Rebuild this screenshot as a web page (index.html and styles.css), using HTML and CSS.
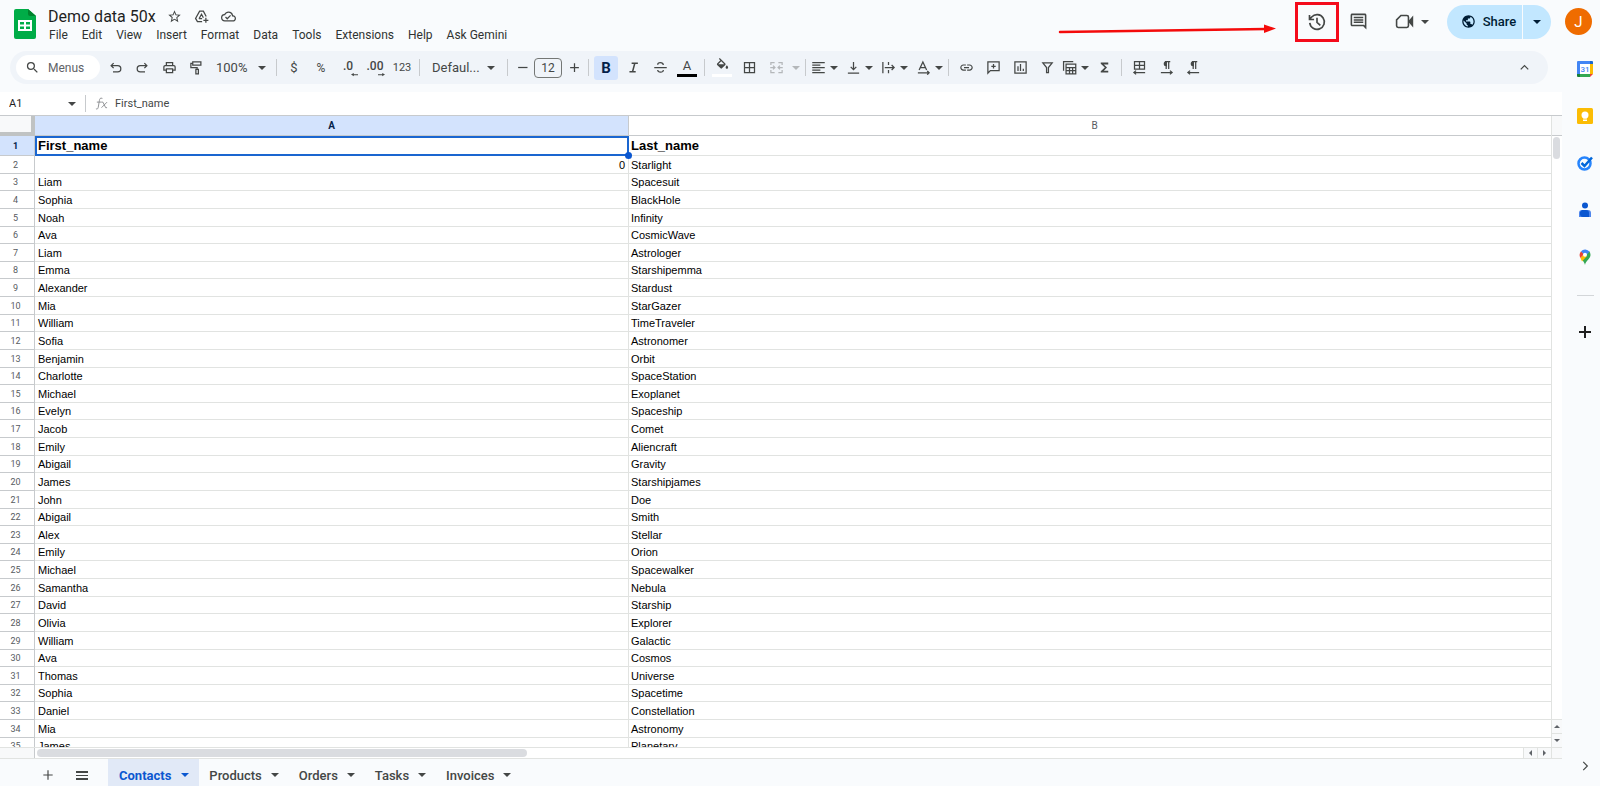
FILE: index.html
```
<!DOCTYPE html>
<html lang="en">
<head>
  <meta charset="UTF-8" />
  <meta name="viewport" content="width=device-width, initial-scale=1.0"/>
  <title>Demo data 50x</title>
  <link rel="stylesheet" href="styles.css">
</head>
<body>

  <header class="header">
    <svg class="logo" viewBox="0 0 22 30">
      <path fill="#00ac47" d="M2 0h12l8 7v21a2 2 0 0 1-2 2H2a2 2 0 0 1-2-2V2a2 2 0 0 1 2-2z"/>
      <path fill="#00832d" d="M14 0l8 7h-6a2 2 0 0 1-2-2z"/>
      <path fill="#fff" fill-rule="evenodd" d="M4 11h14v11H4zM6 13v2.500h4V13zM12 13v2.500h4V13zM6 17.500V20h4v-2.500zM12 17.500V20h4v-2.500z"/>
    </svg>
    <div class="doc">
      <div class="title-row">
        <h1 class="title">Demo data 50x</h1>
        <button class="title-btn" aria-label="Star"><svg viewBox="0 0 24 24"><path d="M22 9.240l-7.190-.620L12 2 9.190 8.630 2 9.240l5.460 4.730L5.820 21 12 17.270 18.180 21l-1.630-7.030L22 9.240zM12 15.400l-3.760 2.270 1-4.280-3.320-2.880 4.380-.380L12 6.100l1.710 4.040 4.380.380-3.320 2.880 1 4.280L12 15.400z"/></svg></button>
        <button class="title-btn" aria-label="Move"><svg viewBox="0 0 24 24" class="line"><path d="M13 20H5.500L2.500 15 9 3.500h6l4.500 8.500M8 15.500l4-7 3 5.500M8 15.500h5M19 14v8M15 18h8"/></svg></button>
        <button class="title-btn" aria-label="Saved to Drive"><svg viewBox="0 0 24 24"><path d="M19.350 10.040A7.490 7.490 0 0 0 12 4C9.110 4 6.600 5.640 5.350 8.040A5.994 5.994 0 0 0 0 14c0 3.310 2.690 6 6 6h13c2.760 0 5-2.240 5-5 0-2.640-2.050-4.780-4.650-4.960zM19 18H6c-2.210 0-4-1.790-4-4 0-2.050 1.530-3.760 3.560-3.970l1.070-.110.500-.950A5.469 5.469 0 0 1 12 6c2.620 0 4.880 1.860 5.390 4.430l.300 1.500 1.530.110A2.980 2.980 0 0 1 22 15c0 1.650-1.350 3-3 3zm-9-3.820l-2.090-2.090L6.500 13.500 10 17l6.010-6.010-1.410-1.410z"/></svg></button>
      </div>
      <nav class="menu">
        <button>File</button>
        <button>Edit</button>
        <button>View</button>
        <button>Insert</button>
        <button>Format</button>
        <button>Data</button>
        <button>Tools</button>
        <button>Extensions</button>
        <button>Help</button>
        <button>Ask Gemini</button>
      </nav>
    </div>

    <div class="header-right">
      <svg class="arrow" viewBox="0 0 218 12"><path fill="none" stroke="#f40b0b" stroke-width="2.500" stroke-linecap="round" d="M2 9l206-3"/><path fill="#f40b0b" d="M206 1.500l12 4-12 4.500z"/></svg>
      <button class="history" aria-label="Version history"><svg viewBox="0 0 24 24" class="line"><path d="M3.300 13a8.800 8.800 0 1 0 2.300-7L3 8.800M3 3.500v5.500h5.500M12 7v5.500l4 3.500"/></svg></button>
      <button class="comments" aria-label="Comments"><svg viewBox="0 0 24 24"><path d="M21.990 4c0-1.100-.890-2-1.990-2H4c-1.100 0-2 .900-2 2v12c0 1.100.900 2 2 2h14l4 4-.010-18zM20 4v13.170L18.830 16H4V4h16zM6 12h12v2H6zm0-3h12v2H6zm0-3h12v2H6z"/></svg></button>
      <button class="meet" aria-label="Video call"><svg viewBox="0 0 24 24" class="line"><path d="M7.500 4.500H15a2 2 0 0 1 2 2v11a2 2 0 0 1-2 2H4a2 2 0 0 1-2-2V10z"/><path fill="currentColor" d="M18.500 11l3.500-4v10l-3.500-4z"/></svg><span class="caret"></span></button>
      <div class="share">
        <button class="share-main"><svg viewBox="0 0 24 24"><path d="M12 2C6.480 2 2 6.480 2 12s4.480 10 10 10 10-4.480 10-10S17.520 2 12 2zm-1 17.930c-3.950-.490-7-3.850-7-7.930 0-.620.080-1.210.210-1.790L9 15v1c0 1.100.900 2 2 2v1.930zm6.900-2.540c-.260-.810-1-1.390-1.900-1.390h-1v-3c0-.550-.450-1-1-1H8v-2h2c.550 0 1-.450 1-1V7h2c1.100 0 2-.900 2-2v-.410c2.930 1.190 5 4.060 5 7.410 0 2.080-.800 3.970-2.100 5.390z"/></svg>Share</button>
        <button class="share-more" aria-label="Share options"><span class="caret"></span></button>
      </div>
      <button class="avatar">J</button>
    </div>
  </header>

  <div class="page">
    <main class="main">
      <div class="toolbar">
        <label class="search">
          <svg viewBox="0 0 24 24"><path d="M15.500 14h-.790l-.280-.270A6.470 6.470 0 0 0 16 9.500 6.500 6.500 0 1 0 9.500 16c1.610 0 3.090-.590 4.230-1.570l.270.280v.790l5 4.990L20.490 19l-4.990-5zm-6 0C7.010 14 5 11.990 5 9.500S7.010 5 9.500 5 14 7.010 14 9.500 11.990 14 9.500 14z"/></svg>
          <input type="text" placeholder="Menus" aria-label="Search the menus">
        </label>
        <button class="tool" aria-label="Undo"><svg viewBox="0 0 24 24" class="line"><path d="M8 19h7.500a4.500 4.500 0 0 0 0-10H5M9 5L5 9l4 4"/></svg></button>
        <button class="tool" aria-label="Redo"><svg viewBox="0 0 24 24" class="line"><path d="M16 19H8.500a4.500 4.500 0 0 1 0-10H19M15 5l4 4-4 4"/></svg></button>
        <button class="tool" aria-label="Print"><svg viewBox="0 0 24 24"><path d="M19 8h-1V3H6v5H5c-1.660 0-3 1.340-3 3v6h4v4h12v-4h4v-6c0-1.660-1.340-3-3-3zM8 5h8v3H8V5zm8 12v2H8v-4h8v2zm2-2v-2H6v2H4v-4c0-.550.450-1 1-1h14c.550 0 1 .450 1 1v4h-2z"/></svg></button>
        <button class="tool" aria-label="Paint format"><svg viewBox="0 0 24 24" class="line"><path d="M6 3h13v5H6zM6 5.500H3V12h10v3M11 15h4v7h-4z"/></svg></button>
        <div class="pick pick-zoom"><select aria-label="Zoom"><option>100%</option></select><span class="caret"></span></div>
        <span class="sep"></span>
        <button class="tool">$</button>
        <button class="tool small">%</button>
        <button class="tool decimal" aria-label="Decrease decimal places">.0<svg viewBox="0 0 10 6"><path d="M10 2.500H4V1L0 3l4 2.500V4h6z"/></svg></button>
        <button class="tool decimal" aria-label="Increase decimal places">.00<svg viewBox="0 0 10 6"><path d="M0 2.500h6V1l4 2-4 2.500V4H0z"/></svg></button>
        <button class="tool digits">123</button>
        <span class="sep"></span>
        <div class="pick pick-font"><select aria-label="Font"><option>Defaul...</option></select><span class="caret"></span></div>
        <span class="sep"></span>
        <button class="tool step" aria-label="Decrease font size"><svg viewBox="0 0 24 24" class="line"><path d="M5 12h15"/></svg></button>
        <input class="font-size" type="text" value="12" aria-label="Font size">
        <button class="tool step" aria-label="Increase font size"><svg viewBox="0 0 24 24" class="line"><path d="M5 12h14M12 5v14"/></svg></button>
        <span class="sep"></span>
        <button class="tool bold active">B</button>
        <button class="tool" aria-label="Italic"><svg viewBox="0 0 24 24"><path d="M9 4v2.500h3.500l-3 11H5.500V20h10v-2.500H12l3-11h4V4z"/></svg></button>
        <button class="tool" aria-label="Strikethrough"><svg viewBox="0 0 24 24" class="line"><path d="M2 12h20M16.500 8c-.500-5-9-4.500-9-.500M7.500 16c.500 5 9.500 4.500 9 0"/></svg></button>
        <button class="tool text-color">A</button>
        <span class="sep"></span>
        <button class="tool fill-color" aria-label="Fill color"><svg viewBox="0 0 24 24"><path d="M16.560 8.940L7.620 0 6.210 1.410l2.380 2.380-5.150 5.150c-.590.590-.590 1.540 0 2.120l5.500 5.500c.290.290.680.440 1.060.440s.770-.150 1.060-.440l5.500-5.500c.590-.580.590-1.530 0-2.120zM5.210 10L10 5.210 14.790 10H5.210zM19 11.500s-2 2.170-2 3.500c0 1.100.900 2 2 2s2-.900 2-2c0-1.330-2-3.500-2-3.500z"/></svg></button>
        <button class="tool" aria-label="Borders"><svg viewBox="0 0 24 24"><path d="M3 3v18h18V3H3zm8 16H5v-6h6v6zm0-8H5V5h6v6zm8 8h-6v-6h6v6zm0-8h-6V5h6v6z"/></svg></button>
        <button class="combo merge" aria-label="Merge cells" disabled><svg viewBox="0 0 24 24" class="line"><path d="M9 4H3v4M15 4h6v4M9 20H3v-4M15 20h6v-4M2 12h7M6.500 9l3 3-3 3M22 12h-7M17.500 9l-3 3 3 3"/></svg><span class="caret"></span></button>
        <span class="sep"></span>
        <button class="combo" aria-label="Horizontal align"><svg viewBox="0 0 24 24"><path d="M2 3h20v2H2zM2 7h13v2H2zM2 11h20v2H2zM2 15h13v2H2zM2 19h20v2H2z"/></svg><span class="caret"></span></button>
        <button class="combo" aria-label="Vertical align"><svg viewBox="0 0 24 24" class="line"><path d="M3 21h18M12 3v12M7.500 11l4.500 4.500 4.500-4.500"/></svg><span class="caret"></span></button>
        <button class="combo" aria-label="Text wrapping"><svg viewBox="0 0 24 24" class="line"><path d="M3 3v18M12 3v5M12 16v5M6 12h15M17 8l4 4-4 4"/></svg><span class="caret"></span></button>
        <button class="combo" aria-label="Text rotation"><svg viewBox="0 0 24 24" class="line"><path d="M5 16L11 3l6 13M7 12h8M3 20.500h18M18 17.500l3 3-3 3"/></svg><span class="caret"></span></button>
        <span class="sep"></span>
        <button class="tool" aria-label="Insert link"><svg viewBox="0 0 24 24"><path d="M3.900 12c0-1.710 1.390-3.100 3.100-3.100h4V7H7c-2.760 0-5 2.240-5 5s2.240 5 5 5h4v-1.900H7c-1.710 0-3.100-1.390-3.100-3.100zM8 13h8v-2H8v2zm9-6h-4v1.900h4c1.710 0 3.100 1.390 3.100 3.100s-1.390 3.100-3.100 3.100h-4V17h4c2.760 0 5-2.240 5-5s-2.240-5-5-5z"/></svg></button>
        <button class="tool" aria-label="Insert comment"><svg viewBox="0 0 24 24" class="line"><path d="M3 21V3h18v14H7zM12 6.500v7M8.500 10h7"/></svg></button>
        <button class="tool" aria-label="Insert chart"><svg viewBox="0 0 24 24" class="line"><path d="M3 3h18v18H3zM8 10v7.500M12 6.500v11M16.500 14v3.500"/></svg></button>
        <button class="tool" aria-label="Create a filter"><svg viewBox="0 0 24 24" class="line"><path d="M4.500 4.500h15L13.500 12v8h-3v-8z"/></svg></button>
        <button class="combo" aria-label="Table views"><svg viewBox="0 0 24 24" class="line"><path d="M2.500 17V2.500H18M6.500 6.500H22V22H6.500zM6.500 12H22M6.500 17H22M12 12v10M17 12v10"/></svg><span class="caret"></span></button>
        <button class="tool" aria-label="Functions"><svg viewBox="0 0 24 24"><path d="M18 4H6v2l6.500 6L6 18v2h12v-3h-7l5-5-5-5h7V4z"/></svg></button>
        <span class="sep"></span>
        <button class="tool" aria-label="Sheet direction"><svg viewBox="0 0 24 24" class="line"><path d="M4 2.500h16v12H4zM4 8.500h16M12 2.500v12M21 20H3M6.500 17L3 20l3.500 3"/></svg></button>
        <button class="tool" aria-label="Left to right"><svg viewBox="0 0 24 24" class="line"><path d="M18 2.500H9.500M11.500 2.500v12M15.500 2.500v12M3 20h18M17.500 17l3.500 3-3.500 3"/><path fill="currentColor" d="M11.500 3v6a3 3 0 0 1 0-6z"/></svg></button>
        <button class="tool" aria-label="Right to left"><svg viewBox="0 0 24 24" class="line"><path d="M18 2.500H9.500M11.500 2.500v12M15.500 2.500v12M21 20H3M6.500 17L3 20l3.500 3"/><path fill="currentColor" d="M11.500 3v6a3 3 0 0 1 0-6z"/></svg></button>
        <button class="tool collapse" aria-label="Hide the menus"><svg viewBox="0 0 24 24" class="line"><path d="M6 15l6-6 6 6"/></svg></button>
      </div>

      <div class="formula-bar">
        <input class="name-box" type="text" value="A1" aria-label="Name box">
        <span class="caret"></span>
        <span class="sep"></span>
        <svg class="fx" viewBox="0 0 14 14"><path d="M8 1.500C5.500.500 5 2 4.700 4L3.500 11c-.300 1.700-1 2.300-2.500 1.700M2 5.500h5M7 5.500h1.500l3 6H13M13 5.500L7 11.500"/></svg>
        <input class="formula" type="text" value="First_name" aria-label="Formula">
      </div>

      <div class="sheet">
        <div class="grid">
          <table>
            <colgroup>
              <col class="col-num">
              <col class="col-a">
              <col>
            </colgroup>
            <thead>
              <tr><th class="corner"></th><th class="selected">A</th><th>B</th></tr>
            </thead>
            <tbody id="rows"></tbody>
          </table>
        </div>
        <div class="vscroll">
          <div class="vscroll-head"></div>
          <div class="vthumb"></div>
          <button class="sb-btn up" aria-label="Scroll up"></button>
          <button class="sb-btn down" aria-label="Scroll down"></button>
        </div>
      </div>
      <div class="hscroll">
        <div class="hscroll-head"></div>
        <div class="htrack"><div class="hthumb"></div></div>
        <button class="sb-btn left" aria-label="Scroll left"></button>
        <button class="sb-btn right" aria-label="Scroll right"></button>
        <div class="scroll-corner"></div>
      </div>
    </main>

    <aside class="rail">
      <button aria-label="Calendar"><svg viewBox="0 0 18 18"><path fill="#4285f4" d="M2 1h13v3H4v10H1V2a1 1 0 0 1 1-1z"/><path fill="#1967d2" d="M14 1h2a1 1 0 0 1 1 1v2h-3z"/><path fill="#fbbc04" d="M14 4h3v10h-3z"/><path fill="#34a853" d="M4 14h10v3H4z"/><path fill="#188038" d="M1 14h3v3H2a1 1 0 0 1-1-1z"/><path fill="#ea4335" d="M14 14h3l-3 3z"/><path fill="#fff" d="M4 4h10v10H4z"/><text x="9" y="12" text-anchor="middle" class="cal-day">31</text></svg></button>
      <button aria-label="Keep"><svg viewBox="0 0 18 18"><rect x="1" y="1" width="16" height="16" rx="1.500" fill="#fbbc04"/><circle cx="9" cy="8" r="3.500" fill="#fff"/><path fill="#fff" d="M7 10h4v1.500H7zM7 12.500h4V14H7z"/></svg></button>
      <button aria-label="Tasks"><svg viewBox="0 0 18 18"><circle cx="8.500" cy="9.500" r="6" fill="none" stroke="#2684fc" stroke-width="2.500"/><path fill="none" stroke="#0066da" stroke-width="2.500" d="M5.500 9l3 3L16 3.500"/></svg></button>
      <button aria-label="Contacts"><svg viewBox="0 0 18 18"><circle cx="9" cy="4.500" r="3" fill="#0b57d0"/><path fill="#4f86ec" d="M6 9h6a3 3 0 0 1 3 3v4H3v-4a3 3 0 0 1 3-3z"/><path fill="#0b57d0" d="M6 9h4a3 3 0 0 1 3 3v4H7a3 3 0 0 1-3-3v-2z"/></svg></button>
      <button aria-label="Maps"><svg viewBox="0 0 18 18"><path fill="#34a853" d="M14.500 7c0 4-4.500 5-5.500 10-.600-2.500-1.800-4-3-5.500L13 3a5.500 5.500 0 0 1 1.500 4z"/><path fill="#fbbc04" d="M4.500 10l3-3.500L11 8l-5 5.500z"/><path fill="#ea4335" d="M5 3.200L8 6l-3.500 4C3.200 8 3.200 5.500 5 3.200z"/><path fill="#4285f4" d="M5 3.200a5.500 5.500 0 0 1 8.500.500L10 7.500 7.500 6z"/><circle cx="9" cy="6.700" r="2" fill="#fff"/></svg></button>
      <span class="rail-line"></span>
      <button aria-label="Get add-ons"><svg viewBox="0 0 18 18"><path fill="none" stroke="#1f1f1f" stroke-width="2" d="M3 9h12M9 3v12"/></svg></button>
    </aside>
  </div>

  <footer class="tabs">
    <button class="tab-icon" aria-label="Add sheet"><svg viewBox="0 0 24 24" class="line"><path d="M4 12h16M12 4v16"/></svg></button>
    <button class="tab-icon" aria-label="All sheets"><svg viewBox="0 0 14 14"><path d="M1 3h12v2H1zM1 7h12v1H1zM1 10h12v2H1z"/></svg></button>
    <button class="tab current">Contacts<span class="caret"></span></button>
    <button class="tab">Products<span class="caret"></span></button>
    <button class="tab">Orders<span class="caret"></span></button>
    <button class="tab">Tasks<span class="caret"></span></button>
    <button class="tab">Invoices<span class="caret"></span></button>
    <button class="rail-toggle" aria-label="Hide side panel"><svg viewBox="0 0 24 24" class="line"><path d="M9 5l7 7-7 7"/></svg></button>
  </footer>

  <script>
    const rows = [
      ["First_name", "Last_name"],
      [0, "Starlight"],
      ["Liam", "Spacesuit"],
      ["Sophia", "BlackHole"],
      ["Noah", "Infinity"],
      ["Ava", "CosmicWave"],
      ["Liam", "Astrologer"],
      ["Emma", "Starshipemma"],
      ["Alexander", "Stardust"],
      ["Mia", "StarGazer"],
      ["William", "TimeTraveler"],
      ["Sofia", "Astronomer"],
      ["Benjamin", "Orbit"],
      ["Charlotte", "SpaceStation"],
      ["Michael", "Exoplanet"],
      ["Evelyn", "Spaceship"],
      ["Jacob", "Comet"],
      ["Emily", "Aliencraft"],
      ["Abigail", "Gravity"],
      ["James", "Starshipjames"],
      ["John", "Doe"],
      ["Abigail", "Smith"],
      ["Alex", "Stellar"],
      ["Emily", "Orion"],
      ["Michael", "Spacewalker"],
      ["Samantha", "Nebula"],
      ["David", "Starship"],
      ["Olivia", "Explorer"],
      ["William", "Galactic"],
      ["Ava", "Cosmos"],
      ["Thomas", "Universe"],
      ["Sophia", "Spacetime"],
      ["Daniel", "Constellation"],
      ["Mia", "Astronomy"],
      ["James", "Planetary"]
    ];

    const rowsEl = document.getElementById("rows");

    rows.forEach((row, i) => {
      const tr = document.createElement("tr");
      const num = document.createElement("th");
      num.textContent = i + 1;
      tr.appendChild(num);

      row.forEach(value => {
        const td = document.createElement("td");
        td.textContent = value;
        if (typeof value === "number") td.className = "number";
        tr.appendChild(td);
      });
      rowsEl.appendChild(tr);
    });

    // A1 is the active cell
    rowsEl.rows[0].cells[0].className = "selected";
    rowsEl.rows[0].cells[1].className = "active-cell";
  </script>

</body>
</html>
```
FILE: styles.css
```
* {
  box-sizing: border-box;
}

body {
  margin: 0;
  height: 100vh;
  display: flex;
  flex-direction: column;
  overflow: hidden;
  background: #f9fbfd;
  color: #444746;
  font-family: Roboto, sans-serif;
  font-size: 13px;
}

button,
input,
select {
  margin: 0;
  padding: 0;
  border: none;
  background: transparent;
  color: inherit;
  font: inherit;
  outline: none;
}

button {
  display: flex;
  align-items: center;
  justify-content: center;
  flex-shrink: 0;
  cursor: pointer;
}

svg {
  display: block;
  flex-shrink: 0;
  fill: currentColor;
}

.line {
  fill: none;
  stroke: currentColor;
  stroke-width: 2;
}

.caret {
  flex-shrink: 0;
  border: 4px solid transparent;
  border-top-color: currentColor;
  border-bottom: none;
}

.sep {
  flex-shrink: 0;
  width: 1px;
  height: 17px;
  margin: 0 2px;
  background: #c7cacd;
}

/* header */
.header {
  display: flex;
  height: 51px;
  padding: 0 8px 0 14px;
}

.logo {
  width: 22px;
  height: 30px;
  margin-top: 9px;
}

.doc {
  padding: 5px 0 0 12px;
}

.title-row {
  display: flex;
  align-items: center;
  height: 22px;
}

.title {
  margin: 0 11px 0 0;
  color: #1f1f1f;
  font-size: 16px;
  font-weight: 400;
}

.title-btn {
  width: 16px;
  margin-right: 11px;
}

.title-btn svg {
  width: 15px;
  height: 15px;
}

.menu {
  display: flex;
  gap: 14px;
  height: 16px;
  padding-left: 1px;
  color: #303332;
  font-size: 12px;
}

.header-right {
  display: flex;
  align-items: center;
  height: 43px;
  margin-left: auto;
}

.arrow {
  width: 218px;
  height: 12px;
  margin: 14px 19px 0 0;
}

.history {
  width: 44px;
  height: 40px;
  margin-right: 10px;
  border: 3px solid #f40b1b;
}

.history svg {
  width: 20px;
  height: 20px;
}

.comments svg {
  width: 19px;
  height: 19px;
}

.meet {
  gap: 7px;
  margin: 0 18px 0 27px;
}

.meet svg {
  width: 19px;
  height: 19px;
}

.share {
  display: flex;
  gap: 1px;
  height: 34px;
  margin-right: 14px;
  color: #001d35;
  font-weight: 500;
}

.share-main {
  gap: 7px;
  width: 75px;
  padding-left: 8px;
  background: #c2e7ff;
  border-radius: 17px 0 0 17px;
}

.share-main svg {
  width: 15px;
  height: 15px;
}

.share-more {
  width: 28px;
  background: #c2e7ff;
  border-radius: 0 17px 17px 0;
}

.avatar {
  width: 27px;
  height: 27px;
  border-radius: 50%;
  background: #ef6c00;
  color: #fff;
  font-size: 15px;
}

.page {
  flex: 1;
  display: flex;
  min-height: 0;
}

.main {
  flex: 1;
  display: flex;
  flex-direction: column;
  min-width: 0;
}

/* toolbar */
.toolbar {
  display: flex;
  align-items: center;
  gap: 3px;
  height: 33px;
  margin: 0 14px 8px 10px;
  padding: 0 12px 0 6px;
  background: #f0f4f9;
  border-radius: 17px;
}

.search {
  display: flex;
  align-items: center;
  gap: 8px;
  width: 84px;
  height: 25px;
  padding-left: 9px;
  background: #fff;
  border-radius: 13px;
  font-size: 12px;
}

.search svg {
  width: 15px;
  height: 15px;
}

.search input {
  width: 48px;
}

.search input::placeholder {
  color: #5f6368;
}

.tool {
  position: relative;
  width: 24px;
  height: 24px;
  border-radius: 3px;
}

.tool svg,
.combo svg {
  width: 15px;
  height: 15px;
}

.tool.small {
  font-size: 12px;
}

.tool.digits {
  font-size: 11px;
}

.tool.step {
  width: 18px;
}

.tool.bold {
  font-size: 15px;
  font-weight: 700;
}

.tool.active {
  background: #d3e3fd;
  color: #041e49;
}

.tool.decimal {
  padding-bottom: 3px;
  font-size: 12px;
  font-weight: 500;
}

.tool.decimal svg {
  position: absolute;
  right: 2px;
  bottom: 3px;
  width: 7px;
  height: 5px;
}

.tool.text-color {
  align-items: flex-start;
  padding-top: 2px;
}

.text-color::after,
.fill-color::after {
  content: "";
  position: absolute;
  left: 2px;
  bottom: 3px;
  width: 20px;
  height: 3px;
  background: #000;
}

.fill-color::after {
  background: #fff;
}

.tool.fill-color {
  padding-bottom: 5px;
}

.combo {
  gap: 4px;
  width: 27px;
  height: 24px;
}

.combo + .combo {
  margin-left: 5px;
}

.combo.merge {
  gap: 8px;
  width: 31px;
  margin-left: 5px;
  color: #b4b7ba;
}

.pick {
  display: flex;
  align-items: center;
  padding: 0 5px;
}

.pick select {
  flex: 1;
  min-width: 0;
  appearance: none;
}

.pick-zoom {
  width: 60px;
}

.pick-font {
  width: 77px;
  padding: 0 7px;
}

.font-size {
  width: 28px;
  height: 20px;
  border: 1px solid #747775;
  border-radius: 4px;
  font-size: 12px;
  text-align: center;
}

.collapse {
  margin-left: auto;
}

/* formula bar */
.formula-bar {
  display: flex;
  align-items: center;
  height: 24px;
  padding-left: 9px;
  background: #fff;
  border-bottom: 1px solid #c7cacd;
  font-size: 11px;
}

.name-box {
  width: 59px;
  color: #1f1f1f;
}

.formula-bar .sep {
  margin: 0 9px;
}

.fx {
  width: 13px;
  height: 13px;
  margin-right: 7px;
  fill: none;
  stroke: #8a8d90;
}

.formula {
  flex: 1;
}

/* sheet */
.sheet {
  flex: 1;
  display: flex;
  min-height: 0;
  background: #fff;
}

.grid {
  flex: 1;
  overflow: hidden;
}

/* column B runs on under the vertical scrollbar */
table {
  width: calc(100% + 10px);
  table-layout: fixed;
  border-spacing: 0;
  color: #000;
  font-family: "Liberation Sans", Arial, sans-serif;
  font-size: 11px;
  line-height: 14px;
}

.col-num {
  width: 35px;
}

.col-a {
  width: 594px;
}

th,
td {
  padding: 0 3px;
  border-right: 1px solid #e1e3e1;
  border-bottom: 1px solid #e1e3e1;
}

td:last-child {
  padding-left: 2px;
}

th {
  border-color: #c7cacd;
  color: #575b5f;
  font-family: Roboto, sans-serif;
  font-size: 10px;
  font-weight: 400;
}

tbody th {
  padding: 0 5px 0 2px;
  font-size: 9px;
}

thead tr,
tbody tr:first-child {
  height: 20px;
}

tbody tr {
  height: 18px;
}

/* rows of the zoomed-out sheet average a little under 18px */
tbody tr:nth-child(8n + 3),
tbody tr:nth-child(8n + 6),
tbody tr:nth-child(8n + 8) {
  height: 17px;
}

tbody tr:first-child td {
  font-size: 13px;
  font-weight: 700;
}

.corner {
  background: #f8f9fa;
  border-right: 4px solid #c0c3c3;
  border-bottom: 4px solid #c0c3c3;
}

th.selected {
  background: #d3e3fd;
  color: #041e49;
  font-weight: 700;
}

.number {
  text-align: right;
}

.active-cell {
  position: relative;
  outline: 2px solid #1a66d0;
  outline-offset: -2px;
}

.active-cell::after {
  content: "";
  position: absolute;
  right: -4px;
  bottom: -4px;
  width: 7px;
  height: 7px;
  border-radius: 50%;
  background: #0b57d0;
}

/* scrollbars */
.vscroll {
  display: flex;
  flex-direction: column;
  width: 11px;
  border-left: 1px solid #e1e3e1;
}

.vscroll-head {
  height: 20px;
  background: #f8f9fa;
  border-bottom: 1px solid #c7cacd;
}

.vthumb {
  width: 7px;
  height: 22px;
  margin: 1px 1px auto;
  background: #dadce0;
  border-radius: 4px;
}

.sb-btn {
  width: 14px;
  height: 100%;
  background: #f8f9fa;
  border-left: 1px solid #e1e3e1;
}

.sb-btn::before {
  content: "";
  border: 3px solid transparent;
}

.vscroll .sb-btn {
  width: 100%;
  height: 14px;
  border-top: 1px solid #e1e3e1;
  border-left: none;
}

.up::before {
  border-top: none;
  border-bottom-color: #5f6368;
}

.down::before {
  border-bottom: none;
  border-top-color: #5f6368;
}

.left::before {
  border-left: none;
  border-right-color: #5f6368;
}

.right::before {
  border-right: none;
  border-left-color: #5f6368;
}

.hscroll {
  display: flex;
  height: 12px;
  background: #fff;
  border-top: 1px solid #e1e3e1;
  border-bottom: 1px solid #e1e3e1;
}

.hscroll-head {
  width: 35px;
  background: #f8f9fa;
  border-right: 1px solid #c7cacd;
}

.htrack {
  flex: 1;
  padding: 1px 2px;
}

.hthumb {
  width: 33%;
  height: 8px;
  background: #dadce0;
  border-radius: 4px;
}

.scroll-corner {
  width: 11px;
  background: #f8f9fa;
  border-left: 1px solid #e1e3e1;
}

/* side panel */
.rail {
  display: flex;
  flex-direction: column;
  align-items: center;
  gap: 29px;
  width: 38px;
  padding: 9px 0 0 8px;
}

.rail svg {
  width: 18px;
  height: 18px;
}

.cal-day {
  fill: #4285f4;
  font-size: 8px;
  font-weight: 500;
}

.rail-line {
  width: 17px;
  height: 1px;
  margin-bottom: -2px;
  background: #d3d6d9;
}

/* sheet tabs */
.tabs {
  display: flex;
  align-items: center;
  height: 27px;
  padding: 0 8px 0 40px;
  font-weight: 500;
}

.tab-icon {
  width: 16px;
  height: 100%;
  padding-top: 4px;
  margin-right: 18px;
}

.tab-icon svg {
  width: 14px;
  height: 14px;
}

.tab {
  gap: 9px;
  height: 100%;
  padding: 5px 10px 0;
}

.tab.current {
  gap: 10px;
  padding: 5px 10px 0 11px;
  background: #e1e9f7;
  color: #0b57d0;
  font-weight: 700;
}

.rail-toggle {
  margin-left: auto;
  padding-bottom: 14px;
}

.rail-toggle svg {
  width: 14px;
  height: 14px;
}
```
